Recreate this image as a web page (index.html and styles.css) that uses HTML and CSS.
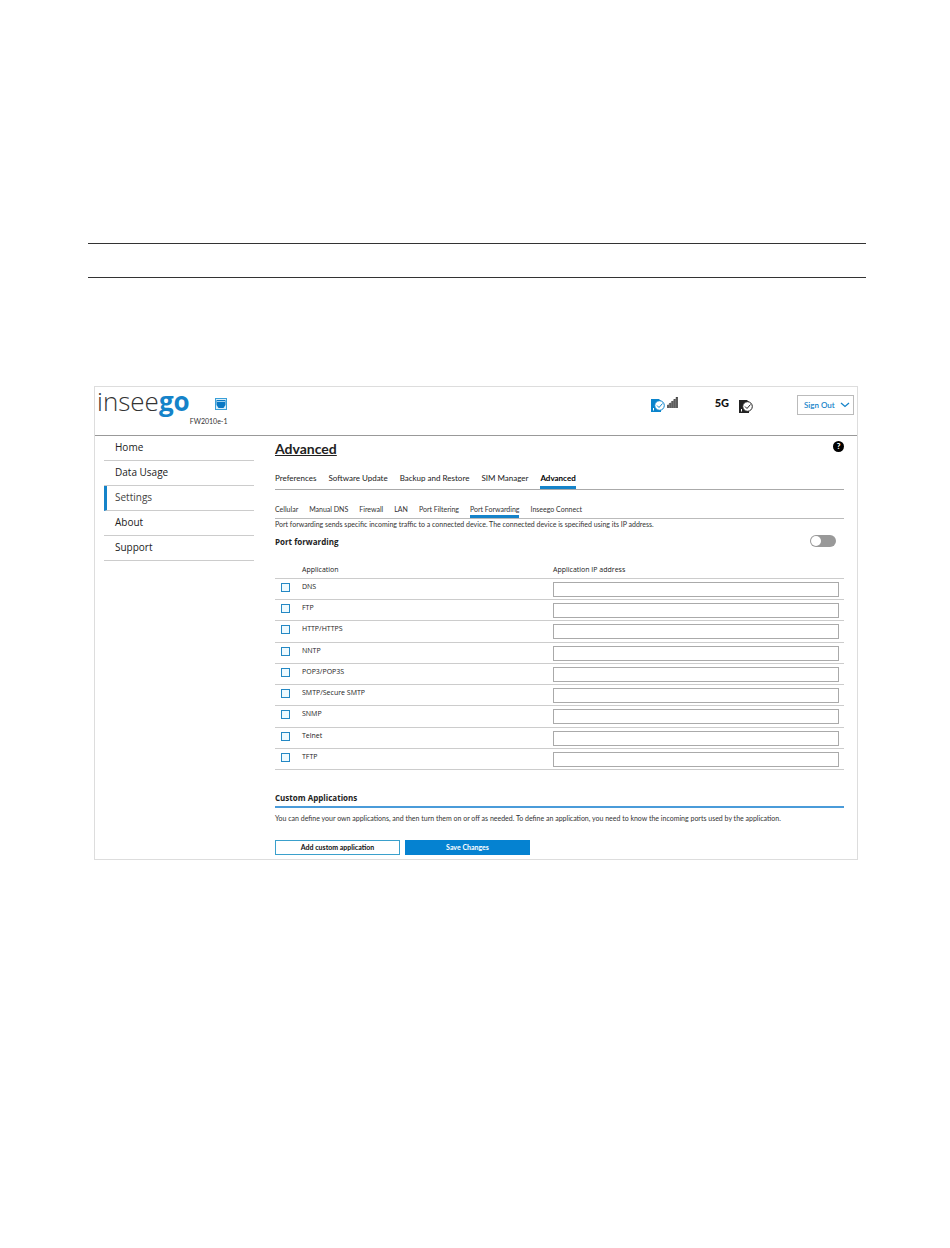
FILE: index.html
```html
<!DOCTYPE html>
<html lang="en">
<head>
<meta charset="utf-8">
<title>Port Forwarding</title>
<link rel="stylesheet" href="styles.css">
</head>
<body>
<main class="page">
  <div class="rule-band"></div>
  <section class="panel">
    <header class="topbar">
      <div class="brand">
        <div class="logo">insee<b>go</b></div>
        <div class="device">
          <svg class="port-icon" viewBox="0 0 12 12" aria-hidden="true"><rect x=".5" y=".5" width="11" height="11" fill="#d9eef9" stroke="#3a9fd8"/><path d="M1.500 2h9v5L8.500 10h-5L1.500 7z" fill="#0a78c4"/><path d="M2 3.500h8" stroke="#9bd0ee"/></svg>
          <span class="model">FW2010e-1</span>
        </div>
      </div>
      <div class="status">
        <svg class="sim-icon" viewBox="0 0 14 13" aria-hidden="true"><path d="M0 0h8l2 2v11H0z" fill="#0a84cc"/><circle cx="8.500" cy="6.500" r="4.800" fill="#fff" stroke="#0a84cc"/><path d="M6 6.500l2 2 3.500-4" fill="none" stroke="#0a84cc"/><path d="M2.500 9v2.500" stroke="#fff"/></svg>
        <svg class="signal-icon" viewBox="0 0 11 11" aria-hidden="true"><path d="M0 8h2v3H0zM2.200 6h2v5h-2zM4.400 4h2v7h-2zM6.600 2h2v9h-2zM8.800 0H11v11H8.800z" fill="#444"/><path d="M0 11V8l11-8v11z" fill="#777" opacity=".5"/></svg>
        <strong class="network">5G</strong>
        <svg class="sim-icon sim-dark" viewBox="0 0 14 13" aria-hidden="true"><path d="M0 0h8l2 2v11H0z" fill="#222"/><circle cx="8.500" cy="6.500" r="4.800" fill="#fff" stroke="#222"/><path d="M6 6.500l2 2 3.500-4" fill="none" stroke="#222"/><path d="M2.500 9v2.500" stroke="#fff"/></svg>
        <button class="signout" type="button">Sign Out
          <svg viewBox="0 0 10 6" aria-hidden="true"><path d="M1 1l4 3.500L9 1" fill="none" stroke="#1583c9" stroke-width="1.300"/></svg>
        </button>
      </div>
    </header>
    <div class="body">
      <nav class="side">
        <a href="#">Home</a>
        <a href="#">Data Usage</a>
        <a href="#" class="current">Settings</a>
        <a href="#">About</a>
        <a href="#">Support</a>
      </nav>
      <div class="content">
        <div class="title-row">
          <h1>Advanced</h1>
          <button class="help" type="button" aria-label="Help">?</button>
        </div>
        <nav class="tabs">
          <a href="#">Preferences</a><a href="#">Software Update</a><a href="#">Backup and Restore</a><a href="#">SIM Manager</a><a href="#" class="current">Advanced</a>
        </nav>
        <nav class="subtabs">
          <a href="#">Cellular</a><a href="#">Manual DNS</a><a href="#">Firewall</a><a href="#">LAN</a><a href="#">Port Filtering</a><a href="#" class="current">Port Forwarding</a><a href="#">Inseego Connect</a>
        </nav>
        <p class="note">Port forwarding sends specific incoming traffic to a connected device. The connected device is specified using its IP address.</p>
        <div class="toggle-row">
          <label for="pf">Port forwarding</label>
          <input id="pf" class="toggle" type="checkbox" role="switch">
        </div>
        <table class="apps">
          <thead><tr><th></th><th>Application</th><th>Application IP address</th></tr></thead>
          <tbody>
            <tr><td><input type="checkbox" id="a1"></td><td><label for="a1">DNS</label></td><td><input type="text" aria-label="DNS IP address"></td></tr>
            <tr><td><input type="checkbox" id="a2"></td><td><label for="a2">FTP</label></td><td><input type="text" aria-label="FTP IP address"></td></tr>
            <tr><td><input type="checkbox" id="a3"></td><td><label for="a3">HTTP/HTTPS</label></td><td><input type="text" aria-label="HTTP/HTTPS IP address"></td></tr>
            <tr><td><input type="checkbox" id="a4"></td><td><label for="a4">NNTP</label></td><td><input type="text" aria-label="NNTP IP address"></td></tr>
            <tr><td><input type="checkbox" id="a5"></td><td><label for="a5">POP3/POP3S</label></td><td><input type="text" aria-label="POP3/POP3S IP address"></td></tr>
            <tr><td><input type="checkbox" id="a6"></td><td><label for="a6">SMTP/Secure SMTP</label></td><td><input type="text" aria-label="SMTP/Secure SMTP IP address"></td></tr>
            <tr><td><input type="checkbox" id="a7"></td><td><label for="a7">SNMP</label></td><td><input type="text" aria-label="SNMP IP address"></td></tr>
            <tr><td><input type="checkbox" id="a8"></td><td><label for="a8">Telnet</label></td><td><input type="text" aria-label="Telnet IP address"></td></tr>
            <tr><td><input type="checkbox" id="a9"></td><td><label for="a9">TFTP</label></td><td><input type="text" aria-label="TFTP IP address"></td></tr>
          </tbody>
        </table>
        <h2>Custom Applications</h2>
        <p class="note custom-note">You can define your own applications, and then turn them on or off as needed. To define an application, you need to know the incoming ports used by the application.</p>
        <div class="actions">
          <button class="btn" type="button">Add custom application</button>
          <button class="btn primary" type="button">Save Changes</button>
        </div>
      </div>
    </div>
  </section>
</main>
</body>
</html>
```
FILE: styles.css
```css
* { box-sizing: border-box; }
body {
  margin: 0;
  background: #fff;
  color: #222;
  font-family: Lato, "Open Sans", sans-serif;
  font-size: 8px;
}
a { color: inherit; text-decoration: none; }
h1, h2, p { margin: 0; }
button { font-family: inherit; cursor: pointer; }

.page { padding: 243px 84px 0 88px; }
.rule-band {
  height: 35px;
  border-top: 1px solid #333;
  border-bottom: 1px solid #333;
}
.panel {
  margin: 108px 8px 0 6px;
  border: 1px solid #ddd;
}

.topbar {
  display: flex;
  justify-content: space-between;
  height: 49px;
  border-bottom: 1px solid #999;
}
.brand { display: flex; }
.logo {
  padding-left: 2px;
  font-family: "Open Sans", sans-serif;
  font-size: 26px;
  font-weight: 300;
  line-height: 29px;
  color: #333;
}
.logo b { color: #1583c9; font-weight: 700; }
.device {
  display: flex;
  flex-direction: column;
  align-items: center;
  gap: 6px;
  padding-top: 11px;
}
.port-icon { width: 12px; height: 12px; margin-left: 24px; }
.model { font-size: 7px; line-height: 10px; color: #333; }
.status {
  display: flex;
  align-items: flex-start;
  padding: 8px 3px 0 0;
}
.sim-icon { width: 14px; height: 13px; margin-top: 4px; }
.signal-icon { width: 11px; height: 11px; margin: 2px 37px 0 2px; }
.network {
  font-size: 11px;
  font-weight: 900;
  line-height: 15px;
  color: #111;
}
.sim-dark { margin: 5px 44px 0 10px; }
.signout {
  display: flex;
  align-items: center;
  justify-content: space-between;
  width: 57px;
  height: 20px;
  padding: 0 3px 0 6px;
  border: 1px solid #bbb;
  background: #fff;
  color: #1583c9;
  font-size: 8px;
  font-weight: 600;
}
.signout svg { width: 10px; height: 6px; }

.body { display: flex; gap: 21px; padding: 0 13px 4px 9px; }
.side { flex: 0 0 150px; }
.side a {
  display: block;
  height: 25px;
  padding-left: 11px;
  border-bottom: 1px solid #ccc;
  font-family: "Open Sans", sans-serif;
  font-size: 10px;
  line-height: 23px;
}
.side .current { padding-left: 8px; border-left: 3px solid #1583c9; color: #444; }
.content { flex: 1; min-width: 0; }

.title-row {
  display: flex;
  justify-content: space-between;
  align-items: flex-start;
  height: 33px;
  padding-top: 5px;
}
h1 { font-size: 14px; line-height: 16px; text-decoration: underline; color: #222; }
.help {
  width: 11px;
  height: 11px;
  padding: 0;
  border: 0;
  border-radius: 50%;
  background: #000;
  color: #fff;
  font-size: 8px;
  font-weight: 900;
  line-height: 11px;
}
.tabs, .subtabs { display: flex; gap: 12px; }
.subtabs { gap: 11px; }
.tabs { height: 21px; border-bottom: 1px solid #aaa; font-size: 8px; line-height: 18px; }
.tabs .current { font-weight: 700; color: #000; border-bottom: 3px solid #1583c9; }
.subtabs {
  height: 18px;
  margin-top: 11px;
  border-bottom: 1px solid #bbb;
  font-size: 7px;
  line-height: 16px;
  color: #333;
}
.subtabs .current { border-bottom: 3px solid #1583c9; }
.note { font-size: 7px; line-height: 11px; color: #333; white-space: nowrap; }
.toggle-row {
  display: flex;
  justify-content: space-between;
  align-items: center;
  height: 12px;
  margin-top: 5px;
  padding-right: 8px;
  font-family: "Open Sans", sans-serif;
  font-size: 8px;
  font-weight: 700;
}
.toggle {
  display: flex;
  align-items: center;
  appearance: none;
  width: 26px;
  height: 12px;
  margin: 0;
  padding: 1px;
  border-radius: 6px;
  background: #999;
}
.toggle::before { content: ""; width: 10px; height: 10px; border-radius: 50%; background: #fff; }

.apps {
  width: 100%;
  height: 208px;
  margin-top: 15px;
  border-collapse: collapse;
  table-layout: fixed;
  font-family: "Open Sans", sans-serif;
}
.apps th, .apps td { padding: 0; border-bottom: 1px solid #ccc; text-align: left; vertical-align: top; }
.apps th { height: 16px; font-size: 7px; font-weight: 400; line-height: 16px; }
.apps th:first-child { width: 27px; }
.apps th:last-child { width: 291px; }
.apps td { height: 21px; font-size: 7px; line-height: 16px; }
.apps label { display: block; }
.apps input { display: block; margin: 4px 0 0; appearance: none; border-radius: 0; }
.apps input[type="checkbox"] { width: 9px; height: 9px; margin-left: 6px; border: 1px solid #2488c4; background: #eefaff; }
.apps input[type="text"] { width: 286px; height: 15px; margin-top: 3px; padding: 0 4px; border: 1px solid #aaa; font: inherit; }

h2 {
  margin-top: 21px;
  padding-bottom: 1px;
  border-bottom: 2px solid #4a9bd9;
  font-family: "Open Sans", sans-serif;
  font-size: 8px;
  line-height: 14px;
}
.custom-note { margin-top: 5px; }
.actions { display: flex; gap: 5px; margin-top: 16px; }
.btn {
  width: 125px;
  height: 15px;
  padding: 0;
  border: 1px solid #3aa0cc;
  background: #fff;
  color: #111;
  font-size: 7px;
  font-weight: 700;
  line-height: 13px;
}
.primary { border-color: #0582d1; background: #0582d1; color: #fff; }
```
